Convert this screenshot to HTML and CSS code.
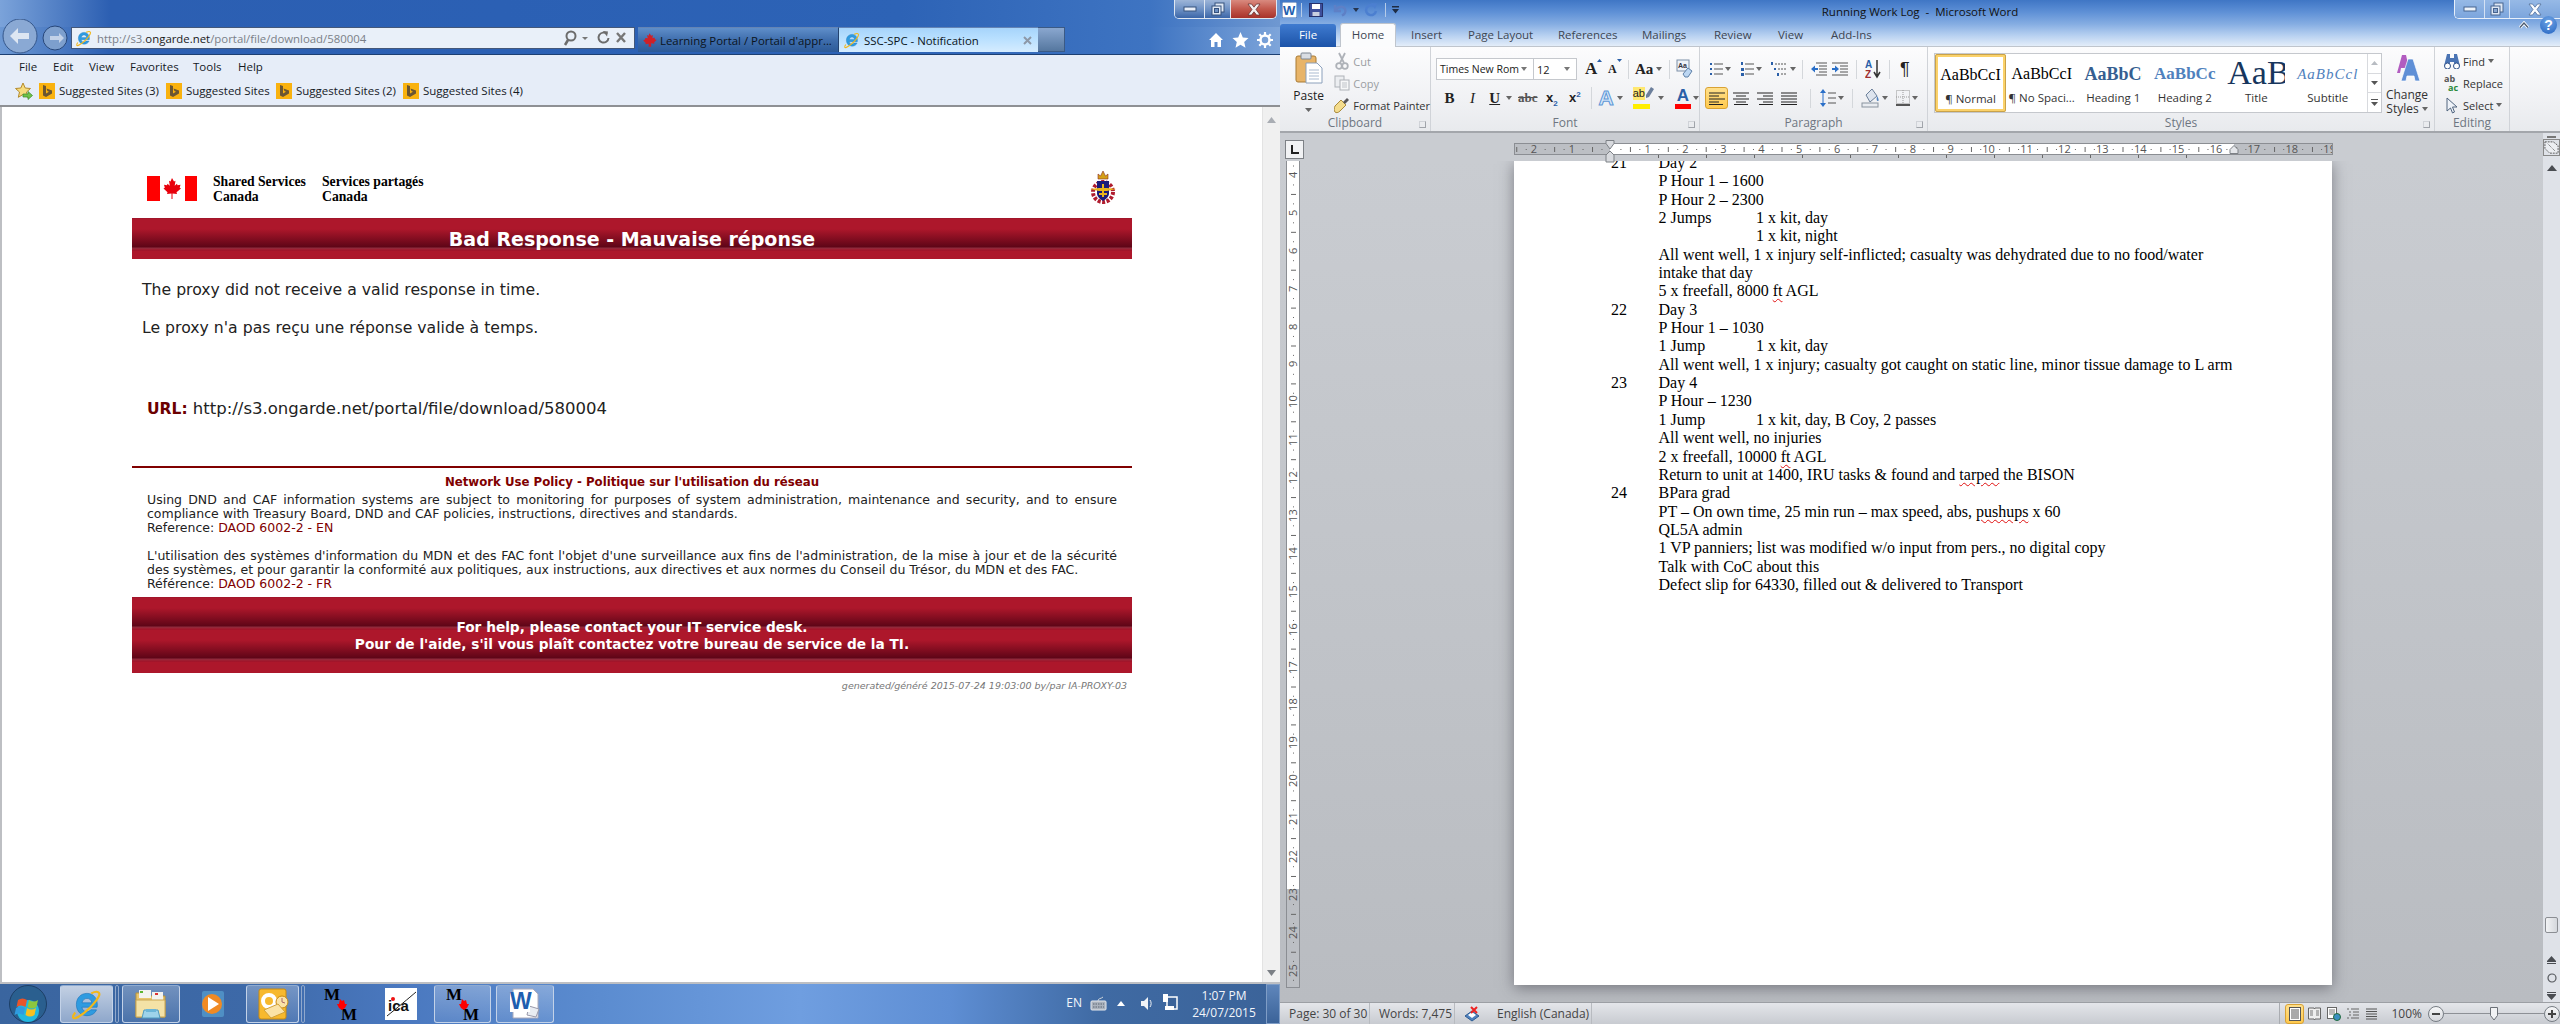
FILE: index.html
```html
<!DOCTYPE html>
<html lang="en">
<head>
<meta charset="utf-8">
<title>Desktop</title>
<link rel="stylesheet" href="styles.css">
</head>
<body>
<svg class="defs" width="0" height="0" aria-hidden="true">
  <defs>
    <symbol id="ie-e" viewBox="0 0 32 32">
      <path d="M16 6c-6 0-10 4.500-10 10.500S10 27 16 27c4.500 0 7.500-2 9-5.500h-5.500c-.8 1.200-2 1.800-3.500 1.800-2.700 0-4.500-1.800-4.800-4.300H25.500c.1-.8.200-1.500.2-2.300C25.700 10.500 22 6 16 6zm-4.700 8.900c.4-2.300 2.200-4.200 4.700-4.200s4.300 1.800 4.600 4.200z" fill="#2f9be0" stroke="#1b75bb" stroke-width=".6"/>
      <path d="M5 24C1 29 3 31 8 28 15 24 24 15 27 9c2-4-1-6-7-3" fill="none" stroke="#f2b71a" stroke-width="2"/>
    </symbol>
    <symbol id="bing" viewBox="0 0 16 16">
      <rect width="16" height="16" fill="#f9b20f"/>
      <path d="M4 2l3 1v7.500l3-1.700-1.600-.8-.9-2.400L13 7.500v3L7 14l-3-1.600z" fill="#6b5632"/>
    </symbol>
    <symbol id="mm" viewBox="0 0 34 34">
      <text x="0" y="13" class="mm-letter">M</text>
      <text x="17" y="33" class="mm-letter">M</text>
      <path d="M16 12l2 2 2-1 1 4 2 0-2 4-3 2-3-2-2-4 2 0z" fill="#f00"/>
    </symbol>
  </defs>
</svg>

<section class="ie">
  <div class="ie-top">
    <div class="winctl">
      <span class="wc wc-min"><svg width="14" height="6"><rect x="1" y="1" width="12" height="4" fill="#e8eef8" stroke="#36527d"/></svg></span>
      <span class="wc wc-max"><svg width="14" height="14"><rect x="4" y="1" width="9" height="9" fill="#dfe8f4" stroke="#36527d"/><rect x="1" y="4" width="9" height="9" fill="#dfe8f4" stroke="#36527d"/><rect x="3.500" y="6.500" width="4" height="4" fill="#6b8fc2" stroke="#36527d"/></svg></span>
      <span class="wc wc-close"><svg width="16" height="13"><path d="M2 1h3.500L8 4.200 10.500 1H14L10 6.500 14 12h-3.500L8 8.800 5.500 12H2L6 6.500z" fill="#f5f0f0" stroke="#5a2b2b" stroke-width=".7"/></svg></span>
    </div>
  </div>
  <div class="ie-nav">
    <svg class="navbtns" width="68" height="35" viewBox="0 0 68 35">
      <circle cx="53" cy="19" r="12" fill="#7d9fcd" stroke="#27477a"/>
      <path d="M62 19l-5-5v3h-9v4h9v3z" fill="#c3d2e8"/>
      <circle cx="18" cy="17" r="17" fill="#8aa9d4" stroke="#36588c"/>
      <path d="M8 17l8-8v5h11v6H16v5z" fill="#dde6f2"/>
    </svg>
    <div class="addr">
      <svg class="addr-e" width="18" height="18"><use href="#ie-e"/></svg>
      <span class="url">http://s3.<b>ongarde.net</b>/portal/file/download/580004</span>
      <svg class="addr-tools" width="74" height="18" viewBox="0 0 74 18">
        <circle cx="9" cy="7" r="4.500" fill="none" stroke="#6c6c6c" stroke-width="2"/><path d="M6 11l-3 5" stroke="#6c6c6c" stroke-width="2.500"/>
        <path d="M20 8h6l-3 3z" fill="#777"/>
        <path d="M45 5a5 5 0 1 0 1.500 4" fill="none" stroke="#6c6c6c" stroke-width="2"/><path d="M41 2l5 .5-1 5z" fill="#6c6c6c"/>
        <path d="M55 4l8 9m0-9l-8 9" stroke="#777" stroke-width="2.400"/>
      </svg>
    </div>
    <div class="tab tab-off">
      <svg width="15" height="16" viewBox="0 0 18 18"><path d="M9 1l2 3 2-1-.5 4 2.500-1 .5 2 2 1-3 3 .5 1.500-4-.5V17H8v-3.500L4 14l.5-1.500-3-3 2-1 .5-2L7 7 6 3l2 1z" fill="#cf2027"/></svg>
      <span>Learning Portal / Portail d'appr...</span>
    </div>
    <div class="tab tab-on">
      <svg width="18" height="20"><use href="#ie-e"/></svg>
      <span class="tab-label">SSC-SPC - Notification</span>
      <svg width="9" height="9" viewBox="0 0 9 9"><path d="M1 1l7 7m0-7l-7 7" stroke="#8d98a8" stroke-width="2"/></svg>
    </div>
    <div class="tab-new"></div>
    <div class="ie-tools">
      <svg width="16" height="16" viewBox="0 0 16 16"><path d="M8 1L1 8h2v7h3.500v-5h3v5H13V8h2z" fill="#fff"/></svg>
      <svg width="17" height="16" viewBox="0 0 17 16"><path d="M8.500 0l2.300 5.500 5.700.5-4.300 3.900 1.300 5.800-5-3-5 3 1.300-5.800L.5 6l5.700-.5z" fill="#fff"/></svg>
      <svg width="16" height="16" viewBox="0 0 16 16"><circle cx="8" cy="8" r="4.500" fill="none" stroke="#fff" stroke-width="2.500"/><path d="M8 0v3M8 13v3M0 8h3M13 8h3M2.300 2.300l2 2M11.700 11.700l2 2M13.700 2.300l-2 2M4.300 11.700l-2 2" stroke="#fff" stroke-width="2.200"/></svg>
    </div>
  </div>
  <div class="ie-bars">
    <div class="menubar"><span class="m1">File</span><span class="m2">Edit</span><span class="m3">View</span><span class="m4">Favorites</span><span class="m5">Tools</span><span>Help</span></div>
    <div class="favbar">
      <svg class="fav-star" width="18" height="18" viewBox="0 0 18 18"><path d="M8 1l2.200 5 5.300.5-4 3.500 1.200 5.300L8 12.500l-4.700 2.800L4.500 10l-4-3.500L5.800 6z" fill="#f6dc7d" stroke="#b48a2c"/><path d="M8 12h5V9.500l4.500 4L13 17.500V15H8z" fill="#6fc24a" stroke="#3b8a2a" stroke-width=".7"/></svg>
      <svg class="fav-b" width="16" height="16"><use href="#bing"/></svg><span class="fav f1">Suggested Sites (3)</span>
      <svg class="fav-b" width="16" height="16"><use href="#bing"/></svg><span class="fav f2">Suggested Sites</span>
      <svg class="fav-b" width="16" height="16"><use href="#bing"/></svg><span class="fav f1">Suggested Sites (2)</span>
      <svg class="fav-b" width="16" height="16"><use href="#bing"/></svg><span class="fav">Suggested Sites (4)</span>
    </div>
  </div>
  <div class="ie-body">
    <main class="page">
      <div class="logos">
        <svg class="flag" width="50" height="25" viewBox="0 0 50 25">
          <rect width="50" height="25" fill="#fff"/><rect width="13" height="25" fill="#f00"/><rect x="38" width="12" height="25" fill="#f00"/>
          <path d="M25 2l2 3.500 1.500-.8-.8 5 2.300-2 .5 1.500 3-.5-.8 3 1.300.8-4.500 3.700.5 1.800-4.500-.5V23h-1v-5.500l-4.500.5.500-1.800L16.500 12.500l1.300-.8-.8-3 3 .5.500-1.500 2.300 2-.8-5 1.500.8z" fill="#e8000b"/>
        </svg>
        <div class="sig sig-en">Shared Services<br>Canada</div>
        <div class="sig">Services partagés<br>Canada</div>
        <svg class="arms" width="28" height="36" viewBox="0 0 28 36">
          <path d="M9 9V4l2.500 2L14 1l2.500 5L19 4v5z" fill="#d4a017" stroke="#8a2b1e" stroke-width=".6"/>
          <circle cx="14" cy="22" r="10" fill="none" stroke="#b01c2e" stroke-width="4" stroke-dasharray="3 1.500"/>
          <path d="M8 11h12v12c0 4-3 6-6 8-3-2-6-4-6-8z" fill="#1b1a7a"/>
          <path d="M1 19l9-1h8l9 1-9 2h-8z" fill="#e9b31b"/>
          <path d="M14 14v13M10 24l8 0" stroke="#e9b31b" stroke-width="2"/>
        </svg>
      </div>
      <h1 class="bar bar-title">Bad Response - Mauvaise réponse</h1>
      <p class="msg msg1">The proxy did not receive a valid response in time.</p>
      <p class="msg msg2">Le proxy n'a pas reçu une réponse valide à temps.</p>
      <p class="url-line"><b>URL:</b> http://s3.ongarde.net/portal/file/download/580004</p>
      <hr class="rule">
      <h2 class="policy-head">Network Use Policy - Politique sur l'utilisation du réseau</h2>
      <div class="policy">
        <div class="jl">Using DND and CAF information systems are subject to monitoring for purposes of system administration, maintenance and security, and to ensure</div>
        <div>compliance with Treasury Board, DND and CAF policies, instructions, directives and standards.</div>
        <div>Reference: <a class="lnk">DAOD 6002-2 - EN</a></div>
        <div class="blank"></div>
        <div class="jl">L'utilisation des systèmes d'information du MDN et des FAC font l'objet d'une surveillance aux fins de l'administration, de la mise à jour et de la sécurité</div>
        <div>des systèmes, et pour garantir la conformité aux politiques, aux instructions, aux directives et aux normes du Conseil du Trésor, du MDN et des FAC.</div>
        <div>Référence: <a class="lnk">DAOD 6002-2 - FR</a></div>
      </div>
      <div class="bar bar-help">For help, please contact your IT service desk.<br>Pour de l'aide, s'il vous plaît contactez votre bureau de service de la TI.</div>
      <div class="gen">generated/généré 2015-07-24 19:03:00 by/par IA-PROXY-03</div>
    </main>
    <div class="ie-scroll">
      <svg width="9" height="6"><path d="M4.500 0L9 6H0z" fill="#a9adb3"/></svg>
      <svg width="9" height="6"><path d="M4.500 6L9 0H0z" fill="#7b7f85"/></svg>
    </div>
  </div>
  <footer class="taskbar">
    <svg class="orb" width="38" height="38" viewBox="0 0 38 38">
      <circle cx="19" cy="19" r="18.500" fill="#2a5f8f" stroke="#1d3f66"/>
      <circle cx="19" cy="26" r="11" fill="#22b7df"/>
      <path d="M9 15c3-2 6-2 9 0l-1.500 7c-3-2-6-2-9 0z" fill="#e8552a"/>
      <path d="M20 15c3 2 6 2 9 0l-1.500 7c-3 2-6 2-9 0z" fill="#8cc63f"/>
      <path d="M7 23c3-2 6-2 9 0l-1.500 7c-3-2-6-2-9 0z" fill="#2f9be0"/>
      <path d="M18 23c3 2 6 2 9 0l-1.500 7c-3 2-6 2-9 0z" fill="#f7c01f"/>
    </svg>
    <div class="tb tb-ie"><svg width="34" height="36"><use href="#ie-e"/></svg></div>
    <div class="tb-sep"></div>
    <div class="tb tb-folder"><svg width="32" height="30" viewBox="0 0 32 30"><path d="M1 4h9l2 3h18v21H1z" fill="#e8c66e" stroke="#b8933d"/><rect x="4" y="1" width="12" height="8" fill="#f3f3ee"/><rect x="5" y="2" width="3" height="2" fill="#5cb531"/><rect x="17" y="3" width="11" height="8" fill="#f3f3ee"/><rect x="20" y="4" width="3" height="2" fill="#d33"/><path d="M1 11h29v17H1z" fill="#f4e2a6" stroke="#c9a552"/><path d="M9 21h14l2 8H7z" fill="#9ed3ea" stroke="#4e9ac0"/><path d="M11 20h10v3H11z" fill="#6cb6d8"/></svg></div>
    <div class="tb tb-media"><svg width="28" height="30" viewBox="0 0 28 30"><rect x="3" y="2" width="22" height="26" rx="2" fill="#4f8fc4"/><circle cx="13" cy="15" r="10" fill="#f08a24"/><path d="M9 8l11 7-11 7z" fill="#fff"/></svg></div>
    <div class="tb tb-outlook"><svg width="32" height="32" viewBox="0 0 32 32"><rect x="2" y="1" width="27" height="30" rx="2" fill="#f7b92e" stroke="#c98a10"/><circle cx="12" cy="13" r="6" fill="none" stroke="#fff" stroke-width="4"/><circle cx="25" cy="14" r="6" fill="#fbe3a6" stroke="#c98a10"/><path d="M25 10v4l3 1" stroke="#a66" fill="none"/><path d="M7 22l14-6 7 8-14 6z" fill="#fbe3a6" stroke="#d1a13a"/></svg></div>
    <div class="tb-sep"></div>
    <div class="tb tb-mm1"><svg width="34" height="34"><use href="#mm"/></svg></div>
    <svg class="ica" width="32" height="32" viewBox="0 0 32 32"><rect width="32" height="32" fill="#fff"/><path d="M2 28C12 20 24 10 31 4" stroke="#222" fill="none"/><text x="3" y="23" class="ica-t">ica</text><circle cx="8" cy="11" r="2" fill="#e11"/></svg>
    <div class="tb tb-mm2"><svg width="34" height="34"><use href="#mm"/></svg></div>
    <div class="tb tb-word"><svg width="32" height="32" viewBox="0 0 32 32"><path d="M4 1h20l5 5 0 24H4z" fill="#fff" stroke="#aab"/><path d="M20 18l10 3-3 8-9-2z" fill="#e8ecf2" stroke="#99a"/><rect x="1" y="4" width="20" height="20" fill="#fff"/><text x="1" y="21" class="w-big">W</text></svg></div>
    <div class="tray">
      <span class="tray-lang">EN</span>
      <svg width="18" height="15" viewBox="0 0 18 15"><rect x="1" y="5" width="15" height="9" rx="1" fill="#aab2bd" stroke="#e7eaee"/><path d="M3 8h11M3 11h11" stroke="#5d6773" stroke-dasharray="1.500 1"/><path d="M8 5C8 2 11 3 13 1" stroke="#cfd5dc" fill="none"/></svg>
      <svg class="tray-up" width="8" height="5"><path d="M4 0l4 5H0z" fill="#fff"/></svg>
      <svg class="tray-vol" width="13" height="15" viewBox="0 0 13 15"><path d="M1 5h3l4-4v13l-4-4H1z" fill="#f0f3f7"/><path d="M10 4c1.500 2 1.500 5 0 7" stroke="#f0f3f7" fill="none"/></svg>
      <svg class="tray-net" width="16" height="18" viewBox="0 0 16 18"><rect x="5" y="3" width="10" height="12" fill="#3b6399" stroke="#fff" stroke-width="1.500"/><rect x="1" y="0" width="5" height="8" fill="#fff"/><path d="M3 12h9v4H3z" fill="#fff"/></svg>
      <div class="clock"><div>1:07 PM</div><div>24/07/2015</div></div>
      <div class="showdesk"></div>
    </div>
  </footer>
</section>

<section class="word">
  <div class="w-title">
    <div class="qat">
      <svg class="qat-w" width="15" height="16" viewBox="0 0 15 16"><rect width="15" height="16" fill="#fff" stroke="#2a5eaa"/><text x="1" y="13" class="w-small">W</text></svg>
      <span class="qat-sep q-s1"></span>
      <svg class="qat-save" width="14" height="14" viewBox="0 0 14 14"><rect x=".5" y=".5" width="13" height="13" fill="#3e4f9b" stroke="#26306a"/><rect x="3" y="1" width="8" height="5" fill="#fff"/><rect x="3.500" y="9" width="7" height="4" fill="#c9cfe0"/></svg>
      <svg class="qat-undo" width="16" height="14" viewBox="0 0 16 14"><path d="M3 2v6h6M3.500 7.500C5 4 11 2 13 6c1.500 3-1 5.500-3 6.500" fill="none" stroke="#5e80c6" stroke-width="2.500"/></svg>
      <svg class="qat-dd" width="6" height="4"><path d="M0 0h6L3 4z" fill="#26354f"/></svg>
      <svg class="qat-redo" width="14" height="14" viewBox="0 0 14 14"><path d="M10 3A5 5 0 1 0 12 8" fill="none" stroke="#4c7fd0" stroke-width="2.500"/><path d="M7 0l6 .5L11 6z" fill="#4c7fd0"/></svg>
      <span class="qat-sep q-s2"></span>
      <svg class="qat-more" width="7" height="8"><path d="M0 0h7v1.500H0zM0 3h7L3.500 7.500z" fill="#1e2c44"/></svg>
    </div>
    <div class="w-name">Running Work Log  -  Microsoft Word</div>
    <div class="w-right">
      <div class="winctl winctl-w">
        <span class="wc wc-wmin"><svg width="14" height="6"><rect x="1" y="1" width="12" height="4" fill="#eef3fa" stroke="#47648f"/></svg></span>
        <span class="wc wc-wmax"><svg width="14" height="14"><rect x="4" y="1" width="9" height="9" fill="#dfe8f4" stroke="#47648f"/><rect x="1" y="4" width="9" height="9" fill="#dfe8f4" stroke="#47648f"/><rect x="3.500" y="6.500" width="4" height="4" fill="#87a6d0" stroke="#47648f"/></svg></span>
        <span class="wc wc-wclose"><svg width="16" height="13"><path d="M2 1h3.500L8 4.200 10.500 1H14L10 6.500 14 12h-3.500L8 8.800 5.500 12H2L6 6.500z" fill="#fafcff" stroke="#47648f" stroke-width=".7"/></svg></span>
      </div>
    </div>
  </div>
  <div class="w-tabs">
    <span class="wt wt-file">File</span><span class="wt wt-home">Home</span>
    <span class="wt wt-w1">Insert</span><span class="wt wt-w2">Page Layout</span><span class="wt wt-w3">References</span><span class="wt wt-w4">Mailings</span><span class="wt wt-w5">Review</span><span class="wt wt-w6">View</span><span class="wt wt-w7">Add-Ins</span>
    <span class="w-help">
      <svg width="12" height="8" viewBox="0 0 12 8"><path d="M2 6.500L6 2l4 4.500" fill="none" stroke="#fff" stroke-width="3"/><path d="M2 6.500L6 2l4 4.500" fill="none" stroke="#4a5a70" stroke-width="1.300"/></svg>
      <span class="help-q">?</span>
    </span>
  </div>
  <div class="ribbon">
    <div class="grp g-clip">
      <div class="grp-body clip-body">
        <div class="paste">
          <svg width="28" height="32" viewBox="0 0 28 32"><rect x="1" y="4" width="20" height="26" rx="2" fill="#e8b468" stroke="#a87b35"/><rect x="6" y="1" width="10" height="6" rx="1" fill="#d9dde3" stroke="#7d8692"/><path d="M11 11h11l5 5v15H11z" fill="#fff" stroke="#8ba0bb"/><path d="M14 18h10M14 21h10M14 24h10M14 27h10" stroke="#a9bad0"/></svg>
          <span>Paste</span>
          <svg class="caret" width="7" height="4"><path d="M0 0h7L3.500 4z" fill="#666"/></svg>
        </div>
        <div class="clip-col">
          <div class="ci ci-off"><svg width="14" height="18" viewBox="0 0 14 18"><path d="M4 1l5 10M10 1L5 11" stroke="#aeb2b8" stroke-width="1.800"/><circle cx="4" cy="14" r="2.800" fill="none" stroke="#aeb2b8" stroke-width="1.800"/><circle cx="10" cy="14" r="2.800" fill="none" stroke="#aeb2b8" stroke-width="1.800"/></svg><span>Cut</span></div>
          <div class="ci ci-off"><svg width="16" height="16" viewBox="0 0 16 16"><rect x="1" y="1" width="9" height="11" fill="#eceef1" stroke="#aeb2b8"/><rect x="6" y="5" width="9" height="10" fill="#f6f7f8" stroke="#aeb2b8"/><path d="M8 8h5M8 10h5M8 12h5" stroke="#bfc3c8"/></svg><span>Copy</span></div>
          <div class="ci"><svg width="16" height="17" viewBox="0 0 16 17"><path d="M1 9l6-6 5 5-6 6c-2 2-4 2-5 1s-1-4 0-6z" fill="#f4dc8c" stroke="#a98a3b"/><path d="M9 5l4-4 2 2-4 4z" fill="#58575a"/></svg><span>Format Painter</span></div>
        </div>
      </div>
      <div class="grp-label">Clipboard<i class="launch"></i></div>
    </div>
    <div class="grp g-font">
      <div class="grp-body font-body">
        <div class="row font-r1">
          <div class="fbox fbox-name"><span>Times New Rom</span><svg width="6" height="4"><path d="M0 0h6L3 4z" fill="#777"/></svg></div>
          <div class="fbox fbox-size"><span>12</span><svg width="6" height="4"><path d="M0 0h6L3 4z" fill="#777"/></svg></div>
          <span class="aa aa-grow">A<svg width="5" height="3"><path d="M2.500 0L5 3H0z" fill="#2a5fa8"/></svg></span>
          <span class="aa aa-shrink">A<svg width="5" height="3"><path d="M2.500 3L5 0H0z" fill="#2a5fa8"/></svg></span>
          <span class="vsep vs1"></span>
          <span class="aa-case">Aa</span><svg class="dd" width="6" height="4"><path d="M0 0h6L3 4z" fill="#666"/></svg>
          <span class="vsep vs2"></span>
          <svg class="clearf" width="17" height="20" viewBox="0 0 17 20"><rect x="1" y="1" width="12" height="11" fill="#eef2f8" stroke="#7d8fa8"/><text x="2" y="9" class="tiny">Aa</text><path d="M7 15l5-6 4 3-4 6-3 0z" fill="#bcd6f2" stroke="#5e80a8"/></svg>
        </div>
        <div class="row font-r2">
          <span class="fb fb-b">B</span><span class="fb fb-i">I</span><span class="fb fb-u">U</span><svg class="dd dd-u" width="6" height="4"><path d="M0 0h6L3 4z" fill="#666"/></svg>
          <span class="fb fb-s">abc</span><span class="fb fb-sub">x<sub>2</sub></span><span class="fb fb-sup">x<sup>2</sup></span>
          <span class="vsep vs3"></span>
          <span class="fb-effect">A</span><svg class="dd" width="6" height="4"><path d="M0 0h6L3 4z" fill="#666"/></svg>
          <span class="hl"><span class="hl-t">ab</span><svg width="9" height="13" viewBox="0 0 9 13"><path d="M6 0l3 2-5 8-3 1 0-3z" fill="#6c7f9c"/></svg></span><svg class="dd dd-h" width="6" height="4"><path d="M0 0h6L3 4z" fill="#666"/></svg>
          <span class="fcol">A</span><svg class="dd" width="6" height="4"><path d="M0 0h6L3 4z" fill="#666"/></svg>
        </div>
      </div>
      <div class="grp-label">Font<i class="launch"></i></div>
    </div>
    <div class="grp g-para">
      <div class="grp-body para-body">
        <div class="row para-r1">
          <svg class="p-bul" width="14" height="16" viewBox="0 0 14 16"><path d="M1 2h2v2H1zM1 7h2v2H1zM1 12h2v2H1z" fill="#2a5fa8"/><path d="M5 3h9M5 8h9M5 13h9" stroke="#555"/></svg><svg class="dd" width="6" height="4"><path d="M0 0h6L3 4z" fill="#666"/></svg>
          <svg class="p-num" width="14" height="16" viewBox="0 0 14 16"><path d="M1 1h2v3H1zM1 7h3v3H1zM1 12h3v3H1z" fill="#2a5fa8"/><path d="M5 3h9M5 8h9M5 13h9" stroke="#555"/></svg><svg class="dd" width="6" height="4"><path d="M0 0h6L3 4z" fill="#666"/></svg>
          <svg class="p-ml" width="18" height="16" viewBox="0 0 18 16"><path d="M1 1h2v3H1zM4 7h2v2H4zM7 12h2v3H7z" fill="#2a5fa8"/><path d="M5 3h12M8 8h9M11 13h6" stroke="#555" stroke-dasharray="2 1"/></svg><svg class="dd" width="6" height="4"><path d="M0 0h6L3 4z" fill="#666"/></svg>
          <span class="vsep vs4"></span>
          <svg class="p-out" width="16" height="15" viewBox="0 0 16 15"><path d="M5 1h11M8 4h8M8 7h8M8 10h8M5 13h11" stroke="#555"/><path d="M0 7l4-3.500v2.500h3v2H4v2.500z" fill="#2a6fc8"/></svg>
          <svg class="p-in" width="16" height="15" viewBox="0 0 16 15"><path d="M0 1h16M8 4h8M8 7h8M8 10h8M0 13h16" stroke="#555"/><path d="M7 7L3 3.500V6H0v2h3v2.500z" fill="#2a6fc8"/></svg>
          <span class="vsep vs5"></span>
          <svg class="p-sort" width="16" height="20" viewBox="0 0 16 20"><text x="0" y="9" class="sort-a">A</text><text x="0" y="19" class="sort-z">Z</text><path d="M12 1v16M9 13l3 5 3-5" stroke="#333" fill="none" stroke-width="1.500"/></svg>
          <span class="vsep vs6"></span>
          <span class="pil">¶</span>
        </div>
        <div class="row para-r2">
          <span class="al al-on"><svg width="16" height="13" viewBox="0 0 16 13"><path d="M0 1h16M0 4h10M0 7h16M0 10h10M0 12.500h14" stroke="#222" stroke-width="1.200"/></svg></span>
          <span class="al"><svg width="16" height="13" viewBox="0 0 16 13"><path d="M0 1h16M3 4h10M0 7h16M3 10h10M1 12.500h14" stroke="#222" stroke-width="1.200"/></svg></span>
          <span class="al"><svg width="16" height="13" viewBox="0 0 16 13"><path d="M0 1h16M6 4h10M0 7h16M6 10h10M2 12.500h14" stroke="#222" stroke-width="1.200"/></svg></span>
          <span class="al"><svg width="16" height="13" viewBox="0 0 16 13"><path d="M0 1h16M0 4h16M0 7h16M0 10h16M0 12.500h16" stroke="#222" stroke-width="1.200"/></svg></span>
          <span class="vsep vs7"></span>
          <svg class="p-sp" width="16" height="18" viewBox="0 0 16 18"><path d="M3 0l3 4H0zM3 18l3-4H0z" fill="#2a6fc8"/><path d="M3 4v10" stroke="#2a6fc8"/><path d="M8 4h8M8 9h8M8 14h8" stroke="#555"/></svg><svg class="dd" width="6" height="4"><path d="M0 0h6L3 4z" fill="#666"/></svg>
          <span class="vsep vs8"></span>
          <svg class="p-shade" width="19" height="20" viewBox="0 0 19 20"><path d="M5 7l6-6 5 7-7 6z" fill="#dde4ee" stroke="#6b7f99"/><path d="M16 8c2 3 2 5 .8 5s-1.400-2-.8-5z" fill="#4f81bd"/><rect x="1" y="15" width="16" height="4" fill="#e9ecf1" stroke="#8a949f"/></svg><svg class="dd" width="6" height="4"><path d="M0 0h6L3 4z" fill="#666"/></svg>
          <svg class="p-bord" width="14" height="16" viewBox="0 0 14 16"><rect x=".5" y=".5" width="13" height="13" fill="none" stroke="#999" stroke-dasharray="1 1"/><path d="M7 0v14M0 7h14" stroke="#999" stroke-dasharray="1 1"/><path d="M0 15h14" stroke="#222" stroke-width="1.500"/></svg><svg class="dd" width="6" height="4"><path d="M0 0h6L3 4z" fill="#666"/></svg>
        </div>
      </div>
      <div class="grp-label">Paragraph<i class="launch"></i></div>
    </div>
    <div class="grp g-styles">
      <div class="grp-body styles-body">
        <div class="gallery">
          <div class="st st-sel"><span class="pv pv-n">AaBbCcI</span><span class="st-l">¶ Normal</span></div>
          <div class="st"><span class="pv pv-n">AaBbCcI</span><span class="st-l">¶ No Spaci...</span></div>
          <div class="st"><span class="pv pv-h1">AaBbCc</span><span class="st-l">Heading 1</span></div>
          <div class="st"><span class="pv pv-h2">AaBbCc</span><span class="st-l">Heading 2</span></div>
          <div class="st"><span class="pv pv-title">AaB</span><span class="st-l">Title</span></div>
          <div class="st"><span class="pv pv-sub">AaBbCcl</span><span class="st-l">Subtitle</span></div>
          <div class="gal-scroll">
            <span><svg width="7" height="4"><path d="M3.500 0L7 4H0z" fill="#b8bcc2"/></svg></span>
            <span><svg width="7" height="4"><path d="M3.500 4L7 0H0z" fill="#555"/></svg></span>
            <span class="gal-more"><svg width="7" height="7"><path d="M0 0h7v1H0zM0 3h7L3.500 7z" fill="#555"/></svg></span>
          </div>
        </div>
        <div class="chg">
          <svg width="32" height="30" viewBox="0 0 32 30"><path d="M6 20L11 2h4l4 18h-4l-1-5h-4l-1 5z" fill="#b25cc0"/><path d="M10 28L17 6h5l7 22h-5l-1-5h-7l-1 5z" fill="#5f8fd6" stroke="#fff" stroke-width=".7"/></svg>
          <span>Change</span>
          <span>Styles <svg width="6" height="4"><path d="M0 0h6L3 4z" fill="#666"/></svg></span>
        </div>
      </div>
      <div class="grp-label">Styles<i class="launch"></i></div>
    </div>
    <div class="grp g-edit">
      <div class="grp-body edit-body">
        <div class="ci"><svg width="16" height="16" viewBox="0 0 16 16"><path d="M3 1h3v4h4V1h3l3 12H10V9H6v4H0z" fill="#4a74b4"/><circle cx="3.500" cy="13" r="3" fill="#fff" stroke="#2e4f87"/><circle cx="12.500" cy="13" r="3" fill="#fff" stroke="#2e4f87"/></svg><span>Find</span><svg width="6" height="4"><path d="M0 0h6L3 4z" fill="#666"/></svg></div>
        <div class="ci"><svg width="16" height="17" viewBox="0 0 16 17"><text x="0" y="7" class="rep-ab">ab</text><text x="4" y="16" class="rep-ac">ac</text></svg><span>Replace</span></div>
        <div class="ci"><svg width="16" height="17" viewBox="0 0 16 17"><path d="M3 1v13l3.500-3 2 5 2-1-2-5h4.500z" fill="#eef2f8" stroke="#50657f"/></svg><span>Select</span><svg width="6" height="4"><path d="M0 0h6L3 4z" fill="#666"/></svg></div>
      </div>
      <div class="grp-label">Editing</div>
    </div>
    <div class="rib-rest"></div>
  </div>
  <div class="w-ruler">
    <span class="tabsel"><svg width="9" height="9"><path d="M1 0h2v7h6v2H1z" fill="#222"/></svg></span>
    <div class="ruler-wrap">
      <div class="ruler">
        <span>2</span><span>1</span><span></span><span>1</span><span>2</span><span>3</span><span>4</span><span>5</span><span>6</span><span>7</span><span>8</span><span>9</span><span>10</span><span>11</span><span>12</span><span>13</span><span>14</span><span>15</span><span>16</span><span>17</span><span>18</span><span>19</span>
      </div>
      <div class="tabticks"></div>
      <svg class="ind-l" width="10" height="23" viewBox="0 0 10 23"><path d="M1 .5h8v3L5 9 1 3.500zM5 11l4 4v7H1v-7z" fill="#d8dade" stroke="#7d8186"/></svg>
      <svg class="ind-r" width="10" height="9" viewBox="0 0 10 9"><path d="M5 .5l4 4v4H1v-4z" fill="#e4e6ea" stroke="#7d8186"/></svg>
    </div>
    <span class="splitbox"><i></i><svg width="16" height="16" viewBox="0 0 16 16"><path d="M1 2h9l5 4v8H6L1 9z" fill="#eceef2" stroke="#555" stroke-dasharray="2 1"/><path d="M4 4l8 8" stroke="#555" stroke-dasharray="1 1"/></svg></span>
  </div>
  <div class="w-main">
    <div class="vruler-col">
      <div class="vruler">
        <span>4</span><span>5</span><span>6</span><span>7</span><span>8</span><span>9</span><span>10</span><span>11</span><span>12</span><span>13</span><span>14</span><span>15</span><span>16</span><span>17</span><span>18</span><span>19</span><span>20</span><span>21</span><span>22</span><span>23</span><span>24</span><span>25</span>
      </div>
    </div>
    <div class="doc">
      <article class="sheet">
        <div class="ln"><span class="no">21</span>Day 2</div>
        <div class="ln">P Hour 1 – 1600</div>
        <div class="ln">P Hour 2 – 2300</div>
        <div class="ln"><span class="t1">2 Jumps</span>1 x kit, day</div>
        <div class="ln"><span class="t1"></span>1 x kit, night</div>
        <div class="ln">All went well, 1 x injury self-inflicted; casualty was dehydrated due to no food/water</div>
        <div class="ln">intake that day</div>
        <div class="ln">5 x freefall, 8000 <u class="sq">ft</u> AGL</div>
        <div class="ln"><span class="no">22</span>Day 3</div>
        <div class="ln">P Hour 1 – 1030</div>
        <div class="ln"><span class="t1">1 Jump</span>1 x kit, day</div>
        <div class="ln">All went well, 1 x injury; casualty got caught on static line, minor tissue damage to L arm</div>
        <div class="ln"><span class="no">23</span>Day 4</div>
        <div class="ln">P Hour – 1230</div>
        <div class="ln"><span class="t1">1 Jump</span>1 x kit, day, B Coy, 2 passes</div>
        <div class="ln">All went well, no injuries</div>
        <div class="ln">2 x freefall, 10000 <u class="sq">ft</u> AGL</div>
        <div class="ln">Return to unit at 1400, IRU tasks &amp; found and <u class="sq">tarped</u> the BISON</div>
        <div class="ln"><span class="no">24</span>BPara grad</div>
        <div class="ln">PT – On own time, 25 min run – max speed, abs, <u class="sq">pushups</u> x 60</div>
        <div class="ln">QL5A admin</div>
        <div class="ln">1 VP panniers; list was modified w/o input from pers., no digital copy</div>
        <div class="ln">Talk with CoC about this</div>
        <div class="ln">Defect slip for 64330, filled out &amp; delivered to Transport</div>
      </article>
    </div>
    <div class="w-scroll">
      <svg width="10" height="6"><path d="M5 0l5 6H0z" fill="#4a4d52"/></svg>
      <span class="w-thumb"></span>
      <svg class="pgup" width="9" height="9"><path d="M0 0h9v1H0zM0 2h9v1L4.500 8 0 3z" fill="#4a4d52" transform="rotate(180 4.500 4.500)"/></svg>
      <svg class="dot" width="10" height="10"><circle cx="5" cy="5" r="4" fill="none" stroke="#55585d" stroke-width="1.200"/></svg>
      <svg class="pgdn" width="9" height="9"><path d="M0 0h9v1H0zM0 2h9v1L4.500 8 0 3z" fill="#4a4d52"/></svg>
    </div>
  </div>
  <footer class="status">
    <span class="s-item s-page">Page: 30 of 30</span>
    <span class="s-item s-words">Words: 7,475</span>
    <span class="s-item s-lang"><svg width="16" height="16" viewBox="0 0 16 16"><path d="M1 10l7-5 7 5-7 5z" fill="#4f81bd" stroke="#2e5c93"/><path d="M4 9l4-3 4 3-4 3z" fill="#fff"/><path d="M7 1l6 6m0-6L7 7" stroke="#e22" stroke-width="2"/></svg><span class="s-en">English (Canada)</span></span>
    <span class="s-fill"></span>
    <span class="s-views">
      <span class="vw vw-on"><svg width="12" height="14" viewBox="0 0 12 14"><rect x=".5" y=".5" width="11" height="13" fill="#fff" stroke="#555"/><path d="M2 3h8M2 5h8M2 7h8M2 9h8M2 11h8" stroke="#555"/></svg></span>
      <span class="vw"><svg width="13" height="14" viewBox="0 0 13 14"><path d="M.5 1h5.500l.5 1 .5-1h5.500v11H7l-.5 1-.5-1H.5z" fill="#eee" stroke="#666"/><path d="M2 4h3M2 6h3M2 8h3M8 4h3M8 6h3M8 8h3" stroke="#777"/></svg></span>
      <span class="vw"><svg width="14" height="14" viewBox="0 0 14 14"><rect x=".5" y=".5" width="9" height="11" fill="#fff" stroke="#666"/><path d="M2 3h6M2 5h6M2 7h6" stroke="#777"/><circle cx="10" cy="10" r="3.500" fill="#3a8fc2" stroke="#1f6a3a"/></svg></span>
      <span class="vw"><svg width="12" height="12" viewBox="0 0 12 12"><path d="M0 1h2M4 1h8M2 4h2M6 4h6M2 7h2M6 7h6M0 10h2M4 10h8" stroke="#666"/></svg></span>
      <span class="vw"><svg width="13" height="12" viewBox="0 0 13 12"><path d="M1 1h11M1 3.500h11M1 6h11M1 8.500h11M1 11h11" stroke="#555"/></svg></span>
    </span>
    <span class="zoom-pct">100%</span>
    <span class="zoom-btn"><svg width="8" height="2"><rect width="8" height="2" fill="#444"/></svg></span>
    <span class="zoom-track"><svg width="8" height="14" viewBox="0 0 8 14"><path d="M.5.5h7v8L4 13 .5 8.500z" fill="#f1f2f4" stroke="#6b7077"/></svg></span>
    <span class="zoom-btn"><svg width="8" height="8"><path d="M3 0h2v3h3v2H5v3H3V5H0V3h3z" fill="#444"/></svg></span>
  </footer>
</section>
</body>
</html>
```
FILE: styles.css
```css
* { box-sizing: border-box; }
html, body { margin: 0; padding: 0; }
body { width: 2560px; height: 1024px; overflow: hidden; display: grid; grid-template-columns: 1280px 1280px; background: #3b6399; }
svg { display: block; flex: none; }
.defs { position: absolute; }
.mm-letter { font: bold 17px "Liberation Serif", serif; fill: #000; }
.ica-t { font: bold 15px "Liberation Sans", sans-serif; fill: #111; }
.w-big { font: bold 23px "Liberation Sans", sans-serif; fill: #1f5fb0; }
.w-small { font: bold 13px "Liberation Sans", sans-serif; fill: #1f5fb0; }
.tiny { font: bold 7px "Liberation Sans", sans-serif; fill: #334; }
.sort-a { font: bold 10px "Liberation Sans", sans-serif; fill: #2a5fa8; }
.sort-z { font: bold 10px "Liberation Sans", sans-serif; fill: #a03030; }
.rep-ab { font: bold 9px "Open Sans", sans-serif; fill: #555; }
.rep-ac { font: bold 9px "Open Sans", sans-serif; fill: #2a8a3a; }

/* ---------- IE window ---------- */
.ie { display: flex; flex-direction: column; height: 1024px; width: 1280px; overflow: hidden; font-family: "Open Sans", sans-serif; }
.ie-top { height: 27px; display: flex; justify-content: flex-end; background: linear-gradient(90deg, #7ba3da 0, #2c5fb2 110px, #2b60b4 500px, #2d63b6 900px, #3e74c2 1150px, #6f98d1 1280px); }
.winctl { width: 103px; height: 19px; margin-right: 3px; display: flex; border: 1px solid #dfe7f2; border-top: 0; border-radius: 0 0 5px 5px; overflow: hidden; }
.wc { display: flex; align-items: center; justify-content: center; height: 100%; }
.wc-min { width: 29px; background: linear-gradient(#9db5d8, #6f92c5 50%, #3b66a8); }
.wc-max { width: 27px; background: linear-gradient(#9db5d8, #6f92c5 50%, #3b66a8); border-left: 1px solid #dfe7f2; border-right: 1px solid #dfe7f2; }
.wc-close { flex: 1; background: linear-gradient(#d98a7f, #c2584c 50%, #a8322a); }
.ie-nav { height: 28px; display: flex; align-items: flex-start; border-bottom: 1px solid #1c3f72; background: linear-gradient(90deg, #6c98d4 0, #2c5fb2 110px, #2b60b4 500px, #2d63b6 900px, #3e74c2 1150px, #7ea5da 1280px); }
.navbtns { margin: -8px 0 0 2px; }
.addr { width: 564px; height: 22px; margin-left: 1px; display: flex; align-items: center; background: #e9f0f9; border: 1px solid #44587a; padding-left: 3px; }
.addr-e { margin-right: 4px; }
.url { flex: 1; font-size: 11.400px; color: #7b8088; white-space: nowrap; }
.url b { font-weight: 400; color: #1a1a1a; }
.addr-tools { margin-right: -2px; }
.tab { height: 25px; display: flex; align-items: center; font-size: 11.400px; white-space: nowrap; }
.tab-off { width: 201px; margin-left: 3px; padding-left: 4px; gap: 3px; color: #0b1420; background: linear-gradient(#5f8ec9, #3f6ead 50%, #2c5a98); border-top: 1px solid #6484b4; border-right: 1px solid #24436f; }
.tab-on { width: 199px; padding-left: 4px; gap: 3px; color: #0b1420; background: linear-gradient(#a6d4fb, #b9e0ff 45%, #d5ecff); border-top: 1px solid #6484b4; }
.tab-label { flex: 1; }
.tab-on svg:last-child { margin-right: 6px; }
.tab-new { width: 27px; height: 25px; background: linear-gradient(#8aa7cf, #55779f); border: 1px solid #3b5a85; border-left: 0; }
.ie-tools { margin-left: auto; display: flex; gap: 8px; margin: 5px 7px 0 auto; }
.ie-bars { height: 52px; background: #e6edf8; border-bottom: 2px solid #8e9094; font-size: 11.500px; color: #15191f; }
.menubar { height: 23px; display: flex; align-items: center; padding-left: 19px; }
.menubar span { display: block; }
.m1 { width: 34px; } .m2 { width: 36px; } .m3 { width: 41px; } .m4 { width: 63px; } .m5 { width: 45px; }
.favbar { height: 25px; display: flex; align-items: center; padding-left: 15px; }
.fav-star { margin-right: 6px; }
.fav-b { margin-right: 4px; }
.fav { white-space: nowrap; }
.f1 { width: 107px; } .f2 { width: 90px; }
.ie-body { flex: 1; display: flex; min-height: 0; border-bottom: 2px solid #bdbfc3; }
.page { flex: 1; border-left: 2px solid #bdbfc3; background: #fff; padding-left: 130px; overflow: hidden; }
.page > * { width: 1000px; }
.logos { height: 111px; padding: 69px 15px 0 15px; display: flex; align-items: flex-start; }
.flag { margin-right: 16px; }
.sig { font: bold 13.700px/15px "Liberation Serif", serif; color: #000; margin-top: -2px; }
.sig-en { width: 109px; }
.arms { margin: -6px 0 0 auto; }
.bar { margin: 0; color: #fff; text-align: center; background: linear-gradient(#96132a 0, #ad172b 1px, #ad172b 11px, #5e0517 29px, #8f2c3e 30px, #a3182c 32px) 0 0 / 100% 32px repeat-y; font-family: "DejaVu Sans", sans-serif; font-weight: 700; }
.bar-title { height: 41px; font-size: 19px; line-height: 43px; }
.msg { margin: 0 0 0 10px; font: 15.700px/20px "DejaVu Sans", sans-serif; color: #222; }
.msg1 { padding-top: 21px; }
.msg2 { padding-top: 18px; }
.url-line { margin: 61px 0 0 15px; font: 16.500px/20px "DejaVu Sans", sans-serif; color: #222; }
.url-line b { color: #6b0000; font-size: 15.500px; }
.rule { height: 2px; margin: 47px 0 0; border: 0; background: #800000; }
.policy-head { margin: 7px 0 0; font: bold 11.750px/14px "DejaVu Sans", sans-serif; color: #800000; text-align: center; }
.policy { padding: 4px 15px 0; height: 108px; font: 12.500px/14px "DejaVu Sans", sans-serif; color: #222; }
.jl { text-align: justify; text-align-last: justify; white-space: normal; }
.blank { height: 14px; }
.lnk { color: #800000; }
.bar-help { height: 76px; padding-top: 22px; font-size: 13.700px; line-height: 17px; font-family: "DejaVu Sans", sans-serif; }
.gen { margin-top: 6px; padding-right: 5px; text-align: right; font: italic 9.500px/14px "DejaVu Sans", sans-serif; color: #777; }
.ie-scroll { width: 18px; background: #f0f0f0; border-left: 1px solid #e3e3e3; display: flex; flex-direction: column; align-items: center; justify-content: space-between; padding: 10px 0 6px; }

.taskbar { height: 40px; display: flex; align-items: center; padding-left: 9px; background: linear-gradient(90deg, #3a659f 0, #3d69a8 250px, #4a78bf 400px, #5b8cd0 600px, #6f9ee0 800px, #5e8ed4 950px, #3f6aa3 1100px, #3b6399 1280px); }
.orb { margin-right: 13px; }
.tb { height: 38px; display: flex; align-items: center; justify-content: center; flex: none; border-radius: 3px; }
.tb-ie, .tb-folder, .tb-outlook, .tb-mm2, .tb-word { border: 1px solid #c3d2e8; border-top-color: #8eaad0; background: linear-gradient(rgba(255,255,255,.28), rgba(255,255,255,.08)); }
.tb-ie { width: 53px; background: linear-gradient(#c3d0e3, #8ea7cb); }
.tb-sep { width: 4px; height: 38px; margin: 0 3px 0 2px; border: 1px solid #90a8cc; border-radius: 2px; }
.tb-folder { width: 58px; }
.tb-media { width: 66px; }
.tb-outlook { width: 53px; }
.tb-mm1 { width: 66px; margin-right: 11px; }
.ica { margin-right: 17px; }
.tb-mm2 { width: 57px; margin-right: 5px; }
.tb-word { width: 58px; }
.tray { margin-left: auto; height: 40px; display: flex; align-items: center; color: #f3f6fb; font-size: 12px; }
.tray-lang { margin-right: 8px; margin-top: -4px; }
.tray svg { margin-top: -2px; }
.tray-up { margin-left: 9px; }
.tray-vol { margin-left: 15px; }
.tray-net { margin-left: 9px; }
.clock { width: 78px; margin-left: 7px; text-align: center; line-height: 17px; }
.showdesk { width: 14px; height: 40px; margin-left: 3px; background: linear-gradient(#5f86bb, #3b6399); border: 1px solid #7f9dc6; }

/* ---------- Word window ---------- */
.word { display: flex; flex-direction: column; height: 1024px; width: 1280px; overflow: hidden; font-family: "Open Sans", sans-serif; font-size: 12px; color: #3b3b3b; background: #c9ccd1; }
.w-title { height: 24px; display: grid; grid-template-columns: 1fr auto 1fr; background: linear-gradient(#3f76c5, #5e90d6 50%, #85ade2); }
.qat { display: flex; align-items: center; padding: 2px 0 6px 2px; }
.qat-sep { width: 1px; height: 14px; background: #b5cbe8; }
.q-s1 { margin-left: 4px; }
.qat-save { margin-left: 7px; }
.qat-undo { margin-left: 9px; }
.qat-dd { margin-left: 5px; }
.qat-redo { margin-left: 5px; }
.q-s2 { margin-left: 7px; }
.qat-more { margin-left: 6px; }
.w-name { font-size: 11.500px; color: #111; line-height: 24px; white-space: pre; }
.w-right { display: flex; justify-content: flex-end; }
.winctl-w { width: 106px; margin-right: 0; border-color: #e7effa; border-right: 0; border-radius: 0 0 0 5px; }
.wc-wmin { width: 29px; background: linear-gradient(#96b9e6, #7ba5dd); }
.wc-wmax { width: 26px; background: linear-gradient(#96b9e6, #7ba5dd); border-left: 1px solid #d5e2f4; border-right: 1px solid #d5e2f4; }
.wc-wclose { flex: 1; background: linear-gradient(#96b9e6, #7ba5dd); }
.w-tabs { height: 23px; display: flex; align-items: flex-end; background: linear-gradient(#85ade2, #b5cff0 50%, #e3edf9); border-bottom: 1px solid #bfc5cd; position: relative; }
.wt { display: block; line-height: 22px; font-size: 11.500px; color: #3d4652; flex: none; }
.wt-file { width: 56px; height: 23px; margin-bottom: -1px; text-align: center; color: #fff; background: linear-gradient(#3f7bd0, #1c53a8); border-radius: 3px 3px 0 0; }
.wt-home { width: 56px; height: 24px; margin: 0 0 -1px 4px; text-align: center; background: #fbfcfd; border: 1px solid #bfc5cd; border-bottom: 0; border-radius: 3px 3px 0 0; }
.wt-w1 { margin-left: 15px; width: 57px; } .wt-w2 { width: 90px; } .wt-w3 { width: 84px; } .wt-w4 { width: 72px; } .wt-w5 { width: 64px; } .wt-w6 { width: 53px; } .wt-w7 { width: 60px; }
.w-help { margin-left: auto; height: 22px; display: flex; align-items: center; gap: 10px; padding-right: 3px; margin-top: -10px; align-self: flex-start; }
.help-q { width: 17px; height: 18px; border-radius: 50%; background: radial-gradient(circle at 50% 30%, #6fa4e4, #2464c2); color: #fff; font: bold 14px/18px "Liberation Sans", sans-serif; text-align: center; }
.ribbon { height: 86px; display: flex; background: linear-gradient(#fcfcfd, #f0f1f4 65%, #e8eaed); border-bottom: 2px solid #a3a6ab; }
.grp { display: flex; flex-direction: column; border-right: 1px solid #d0d3d8; flex: none; position: relative; }
.grp-body { flex: 1; min-height: 0; }
.grp-label { height: 16px; text-align: center; line-height: 16px; color: #6e7681; font-size: 12px; }
.launch { position: absolute; right: 4px; bottom: 3px; width: 7px; height: 7px; border: 1px solid #a0a4aa; border-top-color: #d0d3d8; border-left-color: #d0d3d8; }
.g-clip { width: 151px; }
.g-font { width: 269px; }
.g-para { width: 228px; }
.g-styles { width: 507px; }
.g-edit { width: 75px; }
.rib-rest { flex: 1; }
.clip-body { display: flex; padding: 5px 0 0 12px; }
.paste { width: 36px; display: flex; flex-direction: column; align-items: center; }
.paste span { margin-top: 4px; font-size: 12px; line-height: 16px; color: #222; }
.caret { margin-top: 4px; }
.clip-col { margin: -2px 0 0 9px; }
.ci { height: 22px; display: flex; align-items: center; gap: 4px; font-size: 11px; white-space: nowrap; color: #333; }
.ci > svg:first-child { width: 16px; }
.ci-off { color: #9a9da2; }
.clip-col .ci { gap: 3px; }
.row { display: flex; align-items: center; }
.font-body { padding: 11px 0 0 5px; }
.font-r1 { height: 22px; }
.fbox { height: 22px; display: flex; align-items: center; justify-content: space-between; background: #fff; border: 1px solid #c5c8cd; padding: 0 6px 0 3px; color: #222; font-size: 11px; }
.fbox-name { width: 98px; font-size: 10.500px; white-space: nowrap; }
.fbox-size { width: 43px; border-left: 0; }
.aa { display: flex; align-items: flex-start; font: bold 15px/20px "Liberation Serif", serif; color: #222; width: 22px; padding-left: 5px; }
.aa-grow { margin-left: 3px; font-size: 17px; }
.aa-shrink { font-size: 12px; padding-left: 6px; }
.vsep { width: 1px; height: 19px; background: #d4d7db; flex: none; }
.vs1 { margin: 0 6px 0 4px; }
.aa-case { font: bold 15px "Liberation Serif", serif; color: #222; margin-right: 1px; }
.dd { margin-left: 2px; }
.vs2 { margin: 0 6px 0 7px; }
.font-r2 { height: 22px; margin-top: 7px; font-family: "Liberation Serif", serif; color: #222; }
.fb { display: block; text-align: center; font-size: 15px; line-height: 22px; }
.fb-b { width: 24px; margin-left: 2px; font-weight: 700; }
.fb-i { width: 24px; font-style: italic; font-family: "Liberation Serif", serif; }
.fb-u { width: 22px; font-weight: 700; text-decoration: underline; }
.dd-u { margin: 0 3px 0 1px; }
.fb-s { width: 26px; font-size: 13px; text-decoration: line-through; font-weight: 700; color: #555; }
.fb-sub, .fb-sup { width: 24px; font-weight: 700; font-family: "Liberation Sans", sans-serif; font-size: 13px; }
.fb-sub sub, .fb-sup sup { font-size: 8px; color: #2a5fa8; line-height: 0; }
.vs3 { margin: 0 6px 0 5px; height: 22px; }
.fb-effect { font: bold 21px/22px "Liberation Sans", sans-serif; color: #d7e8fa; -webkit-text-stroke: 1px #5e97d6; width: 17px; }
.hl { width: 17px; margin-left: 10px; height: 22px; display: flex; border-bottom: 5px solid #ffee00; align-items: flex-start; }
.hl-t { font: 11px/13px "Liberation Sans", sans-serif; color: #222; background: #ffe870; height: 13px; }
.dd-h { margin: 0 11px 0 8px; }
.fcol { width: 17px; height: 22px; font: bold 17px/17px "Liberation Sans", sans-serif; color: #2a5fa8; text-align: center; border-bottom: 5px solid #f00; }
.para-body { padding: 11px 0 0 9px; }
.para-r1 { height: 22px; }
.p-num, .p-ml { margin-left: 9px; }
.p-ml { margin-left: 8px; }
.vs4 { margin: 0 8px 0 6px; }
.p-in { margin-left: 5px; }
.vs5 { margin: 0 8px; }
.vs6 { margin: 0 10px 0 8px; }
.pil { font: 18px/22px "Liberation Sans", sans-serif; color: #222; }
.para-r2 { height: 22px; margin-top: 7px; margin-left: -4px; }
.al { width: 23px; height: 22px; display: flex; align-items: center; justify-content: center; flex: none; margin-right: 1px; }
.al-on { background: linear-gradient(#ffe08c, #ffc94d); border: 1px solid #d9a233; border-radius: 3px; }
.vs7 { margin: 0 9px 0 9px; }
.vs8 { margin: 0 8px 0 8px; }
.p-bord { margin-left: 8px; }
.styles-body { display: flex; padding: 6px 0 0 6px; }
.gallery { width: 448px; height: 60px; display: flex; background: #fff; border: 1px solid #c5c8cd; }
.st { width: 71.500px; height: 58px; display: flex; flex-direction: column; align-items: center; padding-top: 2px; overflow: hidden; flex: none; }
.st-sel { width: 71px; border: 3px solid #fbd26a; outline: 1px solid #c9a24a; outline-offset: -1px; border-radius: 2px; padding-top: 0; }
.pv { display: block; height: 33px; line-height: 36px; white-space: nowrap; width: 100%; text-align: center; overflow: hidden; font-family: "Liberation Serif", serif; color: #000; font-size: 16px; }
.st-l { font-size: 11.500px; line-height: 18px; color: #333; white-space: nowrap; }
.pv-h1 { font-weight: 700; font-size: 18px; color: #365f91; text-align: left; padding-left: 7px; width: 64px; align-self: flex-start; }
.pv-h2 { font-weight: 700; font-size: 17px; color: #4f81bd; }
.pv-title { font-size: 34px; line-height: 33px; color: #17365d; width: 58px; text-align: left; }
.pv-sub { font-style: italic; font-size: 15px; letter-spacing: 1px; color: #4f81bd; }
.gal-scroll { margin-left: auto; width: 14px; border-left: 1px solid #d8dade; display: flex; flex-direction: column; }
.gal-scroll span { flex: 1; display: flex; align-items: center; justify-content: center; border-bottom: 1px solid #d8dade; }
.gal-scroll .gal-more { border-bottom: 0; }
.chg { width: 48px; margin-left: 1px; display: flex; flex-direction: column; align-items: center; font-size: 12px; line-height: 14px; color: #333; text-align: center; }
.chg > svg { margin-bottom: 5px; }
.chg span { display: flex; align-items: center; gap: 3px; white-space: nowrap; }
.edit-body { padding: 3px 0 0 9px; }
.edit-body .ci { gap: 3px; }
.w-ruler { height: 28px; display: flex; position: relative; background: #c9ccd1; align-items: flex-start; }
.tabsel { width: 19px; height: 19px; margin: 7px 0 0 5px; display: flex; align-items: center; justify-content: center; background: #f1f2f4; border: 1px solid #7d8186; flex: none; }
.ruler-wrap { width: 819px; margin: 10px 0 0 210px; position: relative; }
.ruler { height: 12px; width: 819px; display: flex; overflow: hidden; border: 1px solid #8b8e93; color: #555; font-size: 11px; line-height: 10px; background:
  linear-gradient(90deg, #666 0 1px, transparent 1px) 1.250px center / 37.900px 5px repeat-x,
  linear-gradient(90deg, #666 0 1px, transparent 1px) 10.720px center / 18.950px 1px repeat-x,
  linear-gradient(90deg, #bcbfc4 0 95px, #fff 95px 719px, #bcbfc4 719px); }
.ruler span { width: 37.900px; flex: none; text-align: center; background: transparent; }
.tabticks { height: 3px; width: 530px; margin-left: 144px; background: repeating-linear-gradient(90deg, #666 0 1px, transparent 1px 48px); }
.ind-l { position: absolute; left: 91px; top: -3px; }
.ind-r { position: absolute; left: 715px; top: 2px; }
.splitbox { margin-left: auto; width: 17px; height: 28px; background: #dfe2e8; display: flex; flex-direction: column; align-items: center; padding-top: 3px; gap: 1px; }
.splitbox i { width: 9px; height: 2px; background: #777; }
.splitbox svg { border: 1px solid #888; width: 17px; height: 17px; }
.w-main { flex: 1; min-height: 0; display: flex; background: linear-gradient(#c9ccd1, #b9bcc1); }
.vruler-col { width: 24px; flex: none; padding: 0 0 14px 6px; }
.vruler { width: 14px; height: 827px; display: flex; flex-direction: column; overflow: hidden; border: 1px solid #8b8e93; border-top: 0; color: #555; font-size: 11px; background:
  linear-gradient(#666 0 1px, transparent 1px) center 32.950px / 5px 37.900px repeat-y,
  linear-gradient(#666 0 1px, transparent 1px) center 4.500px / 1px 18.950px repeat-y,
  linear-gradient(#fff 0 728px, #bcbfc4 728px); }
.vruler span { height: 37.900px; flex: none; display: flex; align-items: center; justify-content: center; writing-mode: vertical-rl; transform: rotate(180deg); line-height: 12px; }
.vruler span:first-child { margin-top: -5px; }
.doc { flex: 1; min-width: 0; padding-left: 210px; overflow: hidden; }
.sheet { width: 818px; height: 824px; background: #fff; box-shadow: 0 3px 14px rgba(60,60,70,.55); padding-left: 97px; overflow: hidden; font: 16px/18.350px "Liberation Serif", serif; color: #000; }
.ln { white-space: nowrap; padding-left: 47.500px; height: 18.350px; }
.ln:first-child { margin-top: -7px; }
.no { display: inline-block; width: 47.500px; margin-left: -47.500px; }
.t1 { display: inline-block; width: 97.500px; }
.sq { text-decoration: underline wavy #e01010; text-decoration-thickness: 1px; text-underline-offset: 2px; }
.w-scroll { width: 17px; flex: none; background: #dfe2e8; display: flex; flex-direction: column; align-items: center; padding-top: 4px; }
.w-thumb { width: 13px; height: 16px; margin-top: 746px; background: linear-gradient(90deg, #f2f3f5, #d4d7dc); border: 1px solid #8b8e93; border-radius: 2px; }
.pgup { margin-top: 22px; }
.dot { margin-top: 9px; }
.pgdn { margin-top: 9px; }
.status { height: 22px; display: flex; align-items: center; background: linear-gradient(#e4e6ea, #c8cbd1); border-top: 1px solid #9c9fa4; color: #444; font-size: 12px; }
.s-item { height: 21px; display: flex; align-items: center; border-right: 1px solid #b8bbc0; white-space: nowrap; }
.s-page { width: 90px; padding-left: 9px; }
.s-words { width: 85px; padding-left: 9px; }
.s-lang { width: 137px; padding-left: 9px; }
.s-en { margin-left: 17px; }
.s-fill { flex: 1; }
.s-views { height: 21px; display: flex; align-items: center; border-left: 1px solid #a9acb1; padding-left: 5px; }
.vw { width: 19px; height: 20px; display: flex; align-items: center; justify-content: center; }
.vw-on { background: linear-gradient(#ffe08c, #ffc94d); border: 1px solid #d9a233; border-radius: 3px; margin-right: 1px; }
.zoom-pct { margin: 0 6px 0 10px; white-space: nowrap; }
.zoom-btn { width: 16px; height: 16px; border-radius: 50%; border: 1px solid #777d84; background: linear-gradient(#f7f8f9, #d5d7dc); display: flex; align-items: center; justify-content: center; flex: none; }
.zoom-track { width: 100px; height: 14px; display: flex; align-items: center; justify-content: center; background: linear-gradient(#8d9096, #8d9096) center / 100% 1px no-repeat; }
```
